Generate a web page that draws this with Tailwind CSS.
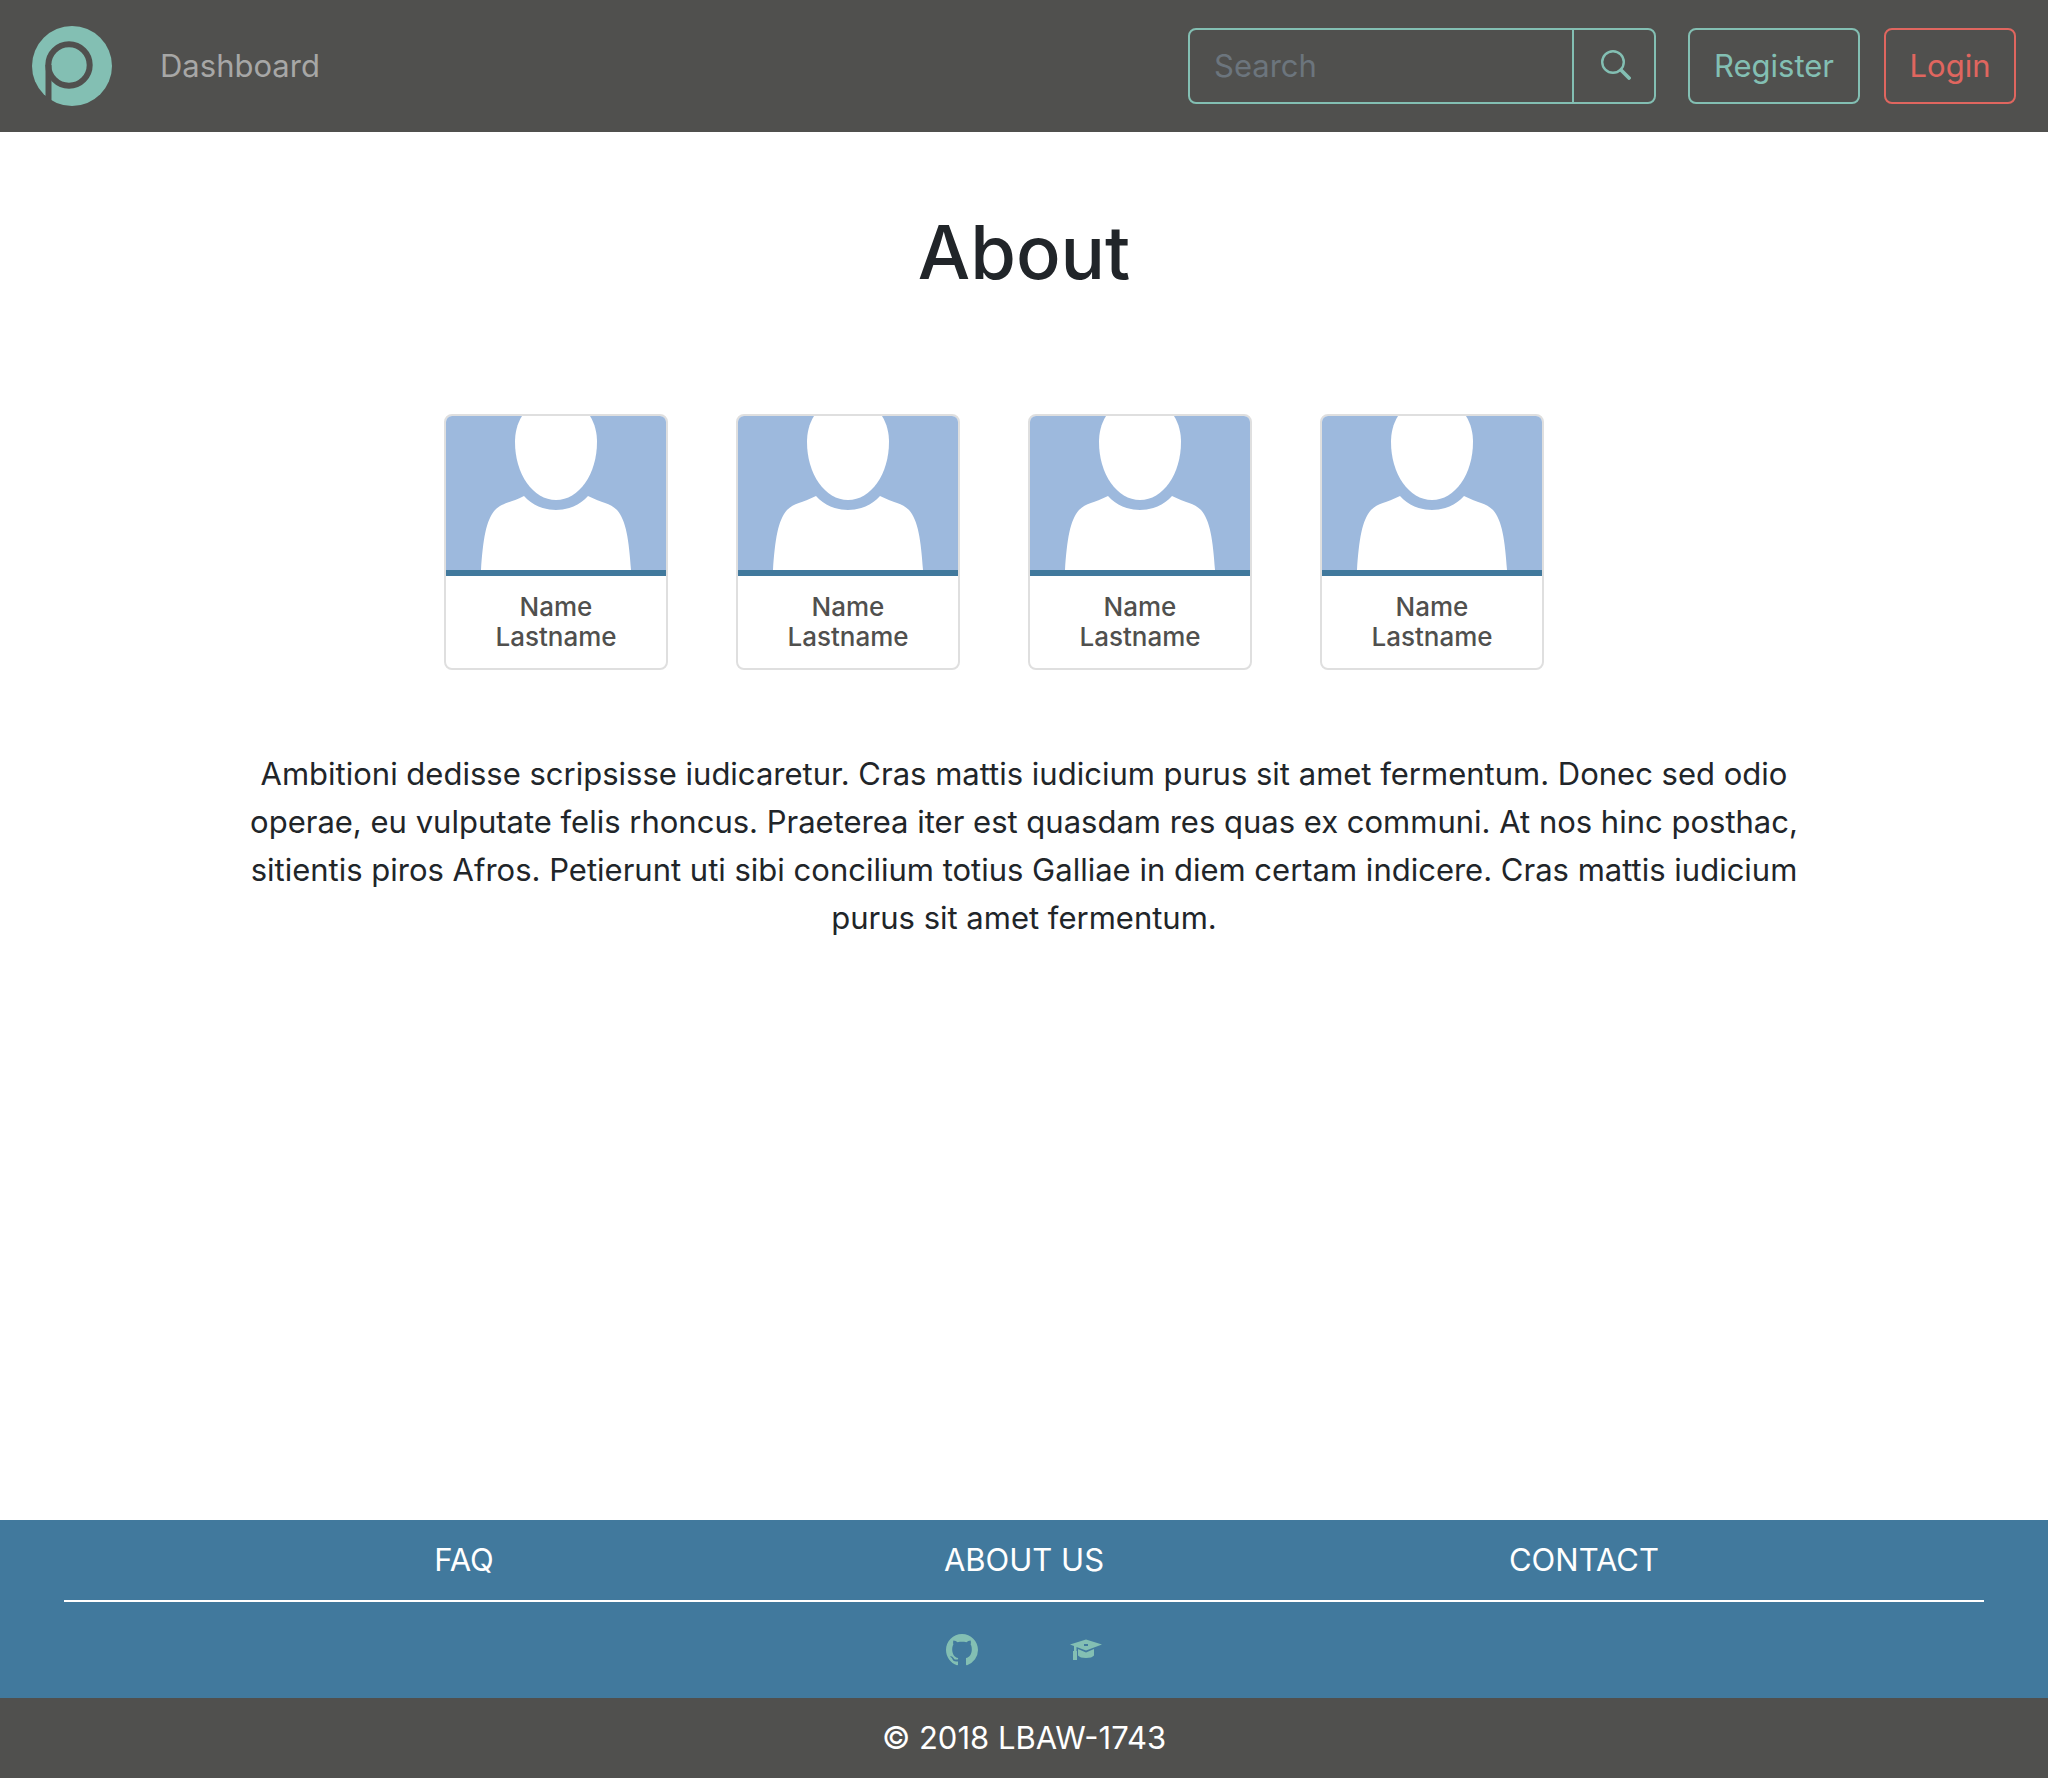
<!DOCTYPE html>
<html lang="en">
<head>
<meta charset="utf-8">
<meta name="viewport" content="width=device-width, initial-scale=1">
<title>About</title>
<script src="https://cdn.jsdelivr.net/npm/@tailwindcss/browser@4"></script>
</head>
<body class="flex min-h-screen flex-col bg-white font-['Inter',sans-serif] text-[31px] leading-[48px] text-[#212529]">

<svg class="hidden" aria-hidden="true">
  <symbol id="avatar" viewBox="0 0 220 154">
    <path fill="#9db9dd" d="M0 0H220V154H0Z"/>
    <path fill="#fff" d="M76 0C71 8 69 17 69 26C69 58 87 84 110 84S151 58 151 26C151 17 149 8 144 0Z"/>
    <path fill="#fff" d="M35 154C37 124 40 104 49 94C56 87 64 87 78 80C86 89 98 94 110 94S134 89 142 80C156 87 164 87 171 94C180 104 183 124 185 154Z"/>
  </symbol>
</svg>

<header class="flex h-33 items-center justify-between bg-[#50504e] px-8">
  <nav class="flex items-center gap-12">
    <a href="#" aria-label="Home">
      <svg class="size-20" viewBox="0 0 80 80" fill="none">
        <circle cx="40" cy="40" r="40" fill="#83bfb3"/>
        <path d="M16.5 80V39" stroke="#50504e" stroke-width="6"/>
        <circle cx="37" cy="39" r="20.7" stroke="#50504e" stroke-width="6"/>
      </svg>
    </a>
    <a href="#" class="text-[#a7a7a6]">Dashboard</a>
  </nav>
  <div class="flex items-center">
    <form class="mr-8 flex h-19 w-117 rounded-lg border-2 border-[#83bfb3]">
      <input type="search" placeholder="Search" aria-label="Search" class="min-w-0 flex-1 bg-transparent px-6 text-white outline-none placeholder:text-[#6c757d]">
      <button type="submit" aria-label="Submit search" class="flex w-[82px] items-center justify-center border-l-2 border-[#83bfb3] pb-0.5 pl-1">
        <svg class="size-[30px]" viewBox="0 0 30 30" fill="none" stroke="#83bfb3" stroke-linecap="round">
          <circle cx="12" cy="12" r="10.8" stroke-width="2.4"/>
          <path d="M20 20L28 28" stroke-width="3.8"/>
        </svg>
      </button>
    </form>
    <button type="button" class="mr-6 h-19 w-43 rounded-lg border-2 border-[#83bfb3] text-[#83bfb3]">Register</button>
    <button type="button" class="h-19 w-33 rounded-lg border-2 border-[#e0665f] text-[#e0665f]">Login</button>
  </div>
</header>

<main class="flex-1 px-16 pt-18">
  <h1 class="text-center text-[74px] leading-24 font-medium">About</h1>
  <section class="mt-[114px] flex justify-center gap-17 pr-15">
    <article class="w-56 overflow-hidden rounded-lg border-2 border-[#dfdfdf]">
      <svg class="h-[154px] w-full" role="img" aria-label="Profile picture"><use href="#avatar"/></svg>
      <h2 class="border-t-6 border-[#41799d] px-8 pt-4 pb-4 text-center text-[26px] leading-[30px] font-medium text-[#50504e]">Name Lastname</h2>
    </article>
    <article class="w-56 overflow-hidden rounded-lg border-2 border-[#dfdfdf]">
      <svg class="h-[154px] w-full" role="img" aria-label="Profile picture"><use href="#avatar"/></svg>
      <h2 class="border-t-6 border-[#41799d] px-8 pt-4 pb-4 text-center text-[26px] leading-[30px] font-medium text-[#50504e]">Name Lastname</h2>
    </article>
    <article class="w-56 overflow-hidden rounded-lg border-2 border-[#dfdfdf]">
      <svg class="h-[154px] w-full" role="img" aria-label="Profile picture"><use href="#avatar"/></svg>
      <h2 class="border-t-6 border-[#41799d] px-8 pt-4 pb-4 text-center text-[26px] leading-[30px] font-medium text-[#50504e]">Name Lastname</h2>
    </article>
    <article class="w-56 overflow-hidden rounded-lg border-2 border-[#dfdfdf]">
      <svg class="h-[154px] w-full" role="img" aria-label="Profile picture"><use href="#avatar"/></svg>
      <h2 class="border-t-6 border-[#41799d] px-8 pt-4 pb-4 text-center text-[26px] leading-[30px] font-medium text-[#50504e]">Name Lastname</h2>
    </article>
  </section>
  <p class="mx-auto mt-20 max-w-[1560px] text-center">Ambitioni dedisse scripsisse iudicaretur. Cras mattis iudicium purus sit amet fermentum. Donec sed odio operae, eu vulputate felis rhoncus. Praeterea iter est quasdam res quas ex communi. At nos hinc posthac, sitientis piros Afros. Petierunt uti sibi concilium totius Galliae in diem certam indicere. Cras mattis iudicium purus sit amet fermentum.</p>
</main>

<footer class="text-white">
  <div class="bg-[#41799d] px-16">
    <nav class="mx-auto grid h-20 max-w-[1680px] grid-cols-3 items-center text-center">
      <a href="#">FAQ</a>
      <a href="#">ABOUT US</a>
      <a href="#">CONTACT</a>
    </nav>
    <hr class="border-t-2 border-white">
    <div class="flex h-24 items-center justify-center gap-23 text-[#83bfb3]">
      <a href="#" aria-label="GitHub">
        <svg class="size-8" viewBox="0 0 16 16" fill="currentColor"><path d="M8 0C3.58 0 0 3.58 0 8c0 3.54 2.29 6.53 5.47 7.59.4.07.55-.17.55-.38 0-.19-.01-.82-.01-1.49-2.01.37-2.53-.49-2.69-.94-.09-.23-.48-.94-.82-1.13-.28-.15-.68-.52-.01-.53.63-.01 1.08.58 1.23.82.72 1.21 1.87.87 2.33.66V12C4.2 11.6 3.1 9.9 3.1 7.7C3.1 6.6 3.4 5.8 3.7 5.3C3.5 4.7 3.5 4 3.7 3.3C4.5 3.4 5.2 3.7 5.8 4.1C7.2 3.8 8.8 3.8 10.2 4.1C10.8 3.7 11.5 3.4 12.3 3.3C12.5 4 12.5 4.7 12.3 5.3C12.7 5.8 12.9 6.6 12.9 7.7C12.9 9.9 11.8 11.6 10 12V15.2C10 15.5 10.2 15.7 10.55 15.6A8.01 8.01 0 0 0 16 8c0-4.42-3.58-8-8-8z"/></svg>
      </a>
      <a href="#" aria-label="University">
        <svg class="size-8" viewBox="0 0 32 32" fill="currentColor"><path fill-rule="evenodd" d="M0 10.5L16 5.5L32 10.5L16 16.5L6.5 13V17H7V26H3V17H4V12ZM14 10V12H18V10Z"/><path d="M8 15L16 18.5L24 15V21.5Q22 24 16 24T8 21.5Z"/></svg>
      </a>
    </div>
  </div>
  <p class="bg-[#50504e] py-4 text-center">© 2018 LBAW-1743</p>
</footer>
</body>
</html>
